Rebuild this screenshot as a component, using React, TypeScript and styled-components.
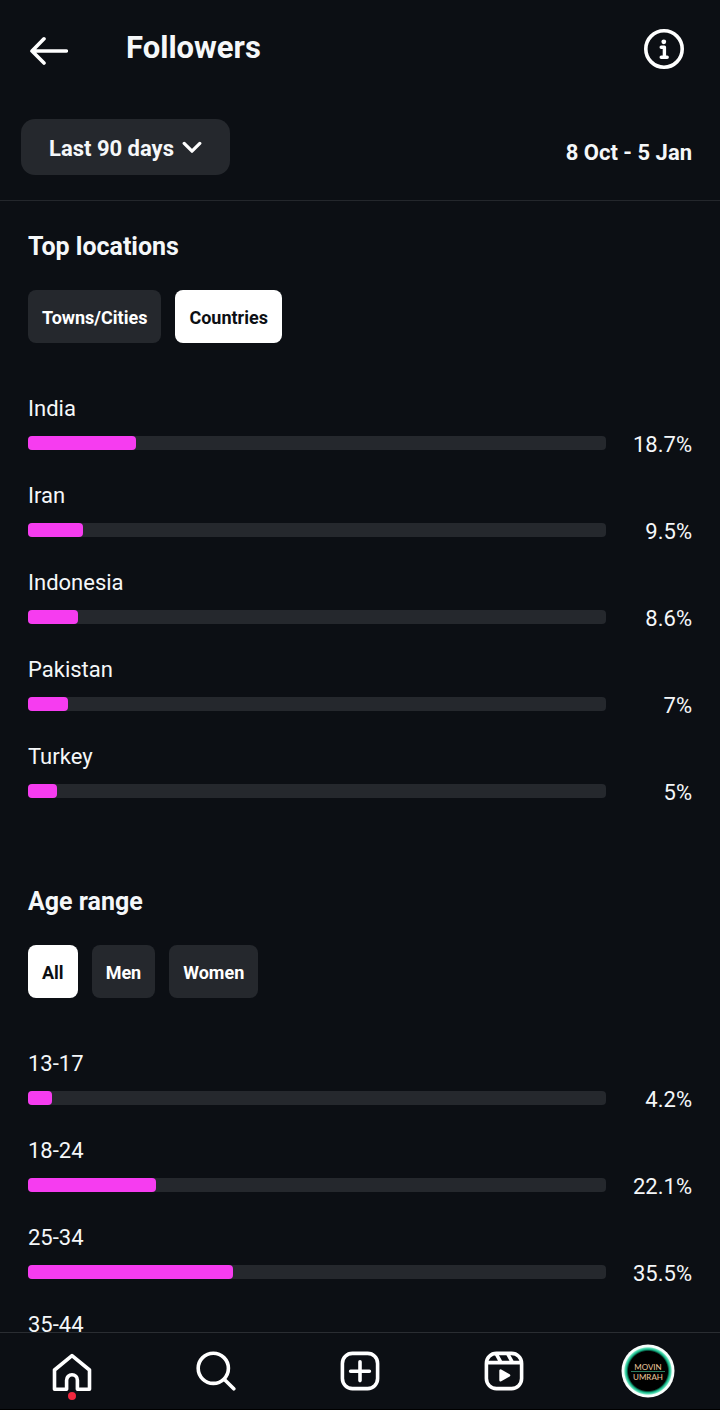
import React, { useState } from 'react';
import styled, { createGlobalStyle } from 'styled-components';

const GlobalStyle = createGlobalStyle`
  * { box-sizing: border-box; }
  body {
    margin: 0;
    background: #0c0f14;
    color: #f5f7f9;
    font-family: Roboto, "Liberation Sans", sans-serif;
  }
  button, select { font-family: inherit; }
`;

const Screen = styled.div`
  display: flex;
  flex-direction: column;
  height: 100vh;
  background: #0c0f14;
`;

const Header = styled.header`
  flex: none;
  border-bottom: 1px solid #24272c;
  padding-bottom: 25px;
`;

const TitleBar = styled.div`
  display: flex;
  align-items: center;
  height: 98px;
  padding: 0 36px 0 28px;
`;

const Title = styled.h1`
  flex: 1;
  margin: 0 0 0 56px;
  padding: 0 0 2px 2px;
  font-size: 31px;
  line-height: 40px;
  font-weight: 700;
`;

const IconButton = styled.button`
  display: flex;
  padding: 0;
  border: 0;
  background: none;
  color: #ffffff;
  cursor: pointer;
`;

const FilterBar = styled.div`
  display: flex;
  align-items: center;
  justify-content: space-between;
  margin-top: 21px;
  padding: 0 28px 0 21px;
`;

const SelectWrap = styled.div`
  display: grid;
  align-items: center;
  > * { grid-area: 1 / 1; }
  > svg {
    justify-self: end;
    margin-right: 28px;
    pointer-events: none;
  }
`;

const PeriodSelect = styled.select`
  appearance: none;
  height: 56px;
  padding: 2px 56px 0 28px;
  border: 0;
  border-radius: 14px;
  background: #25282d;
  color: #f5f7f9;
  font-size: 22px;
  font-weight: 700;
`;

const DateRange = styled.span`
  padding-top: 12px;
  font-size: 22px;
  line-height: 28px;
  font-weight: 700;
`;

const Content = styled.main`
  flex: 1;
  min-height: 0;
  overflow-y: auto;
  scrollbar-width: none;
  padding: 0 28px;
`;

const Section = styled.section`
  padding: 30px 0 51px;
`;

const SectionTitle = styled.h2`
  margin: 0;
  font-size: 25px;
  line-height: 32px;
  font-weight: 700;
`;

const Chips = styled.div`
  display: flex;
  gap: 14px;
  margin: 27px 0 52px;
`;

const Chip = styled.button<{ $active: boolean }>`
  height: 53px;
  padding: 2px 14px 0;
  border: 0;
  border-radius: 8px;
  background: ${({ $active }) => ($active ? '#ffffff' : '#25282d')};
  color: ${({ $active }) => ($active ? '#0c0f14' : '#ffffff')};
  font-size: 18px;
  font-weight: 700;
  cursor: pointer;
`;

const BarList = styled.ul`
  display: flex;
  flex-direction: column;
  gap: 25px;
  margin: 0;
  padding: 0;
  list-style: none;
  font-size: 22px;
  line-height: 28px;
`;

const BarRow = styled.li`
  display: grid;
  grid-template-columns: 1fr 86px;
  row-gap: 6px;
  align-items: center;
`;

const BarLabel = styled.span`
  grid-column: 1 / -1;
`;

const Track = styled.div`
  height: 14px;
  border-radius: 4px;
  background: #25282d;
`;

const Fill = styled.div`
  height: 100%;
  border-radius: 4px;
  background: #f63cf0;
`;

const BarValue = styled.span`
  padding-top: 2px;
  margin-bottom: -2px;
  text-align: right;
`;

const NavBar = styled.nav`
  flex: none;
  display: grid;
  grid-template-columns: repeat(5, 1fr);
  height: 78px;
  border-top: 1px solid #2a2d32;
  border-bottom: 1px solid #000000;
`;

const NavLink = styled.a`
  position: relative;
  display: flex;
  align-items: center;
  justify-content: center;
  color: #ffffff;
`;

const Dot = styled.span`
  position: absolute;
  bottom: 9px;
  left: 50%;
  width: 8px;
  height: 8px;
  margin-left: -4px;
  border-radius: 50%;
  background: #f2283f;
`;

type Item = { label: string; value: number };

const countries: Item[] = [
  { label: 'India', value: 18.7 },
  { label: 'Iran', value: 9.5 },
  { label: 'Indonesia', value: 8.6 },
  { label: 'Pakistan', value: 7 },
  { label: 'Turkey', value: 5 },
];

const ages: Item[] = [
  { label: '13-17', value: 4.2 },
  { label: '18-24', value: 22.1 },
  { label: '25-34', value: 35.5 },
  { label: '35-44', value: 22.4 },
];

const Icon = ({ children }: { children: React.ReactNode }) => (
  <svg
    width="40"
    height="40"
    viewBox="0 0 40 40"
    fill="none"
    stroke="currentColor"
    strokeWidth="3.6"
    strokeLinecap="round"
    strokeLinejoin="round"
    aria-hidden="true"
  >
    {children}
  </svg>
);

const Avatar = () => (
  <svg width="54" height="54" viewBox="0 0 54 54" aria-hidden="true">
    <defs>
      <radialGradient id="ring" cx="50%" cy="50%" r="50%">
        <stop offset="74%" stopColor="#000000" />
        <stop offset="81%" stopColor="#14b083" />
        <stop offset="87%" stopColor="#5fe0b8" />
        <stop offset="91%" stopColor="#f4fffb" />
        <stop offset="100%" stopColor="#ffffff" />
      </radialGradient>
    </defs>
    <circle cx="27" cy="27" r="26.5" fill="url(#ring)" />
    <path d="M10 27.5H44" stroke="#2c7a5e" strokeWidth="1" />
    <g fill="#ecc79d" fontFamily="Lato, sans-serif" fontSize="8" textAnchor="middle">
      <text x="27" y="25.5">MOVIN</text>
      <text x="27" y="36">UMRAH</text>
    </g>
  </svg>
);

function Chart({ items }: { items: Item[] }) {
  return (
    <BarList>
      {items.map(({ label, value }) => (
        <BarRow key={label}>
          <BarLabel>{label}</BarLabel>
          <Track role="meter" aria-label={label} aria-valuenow={value} aria-valuemin={0} aria-valuemax={100}>
            <Fill style={{ width: `${value}%` }} />
          </Track>
          <BarValue>{value}%</BarValue>
        </BarRow>
      ))}
    </BarList>
  );
}

type BreakdownProps = { title: string; options: string[]; initial: string; items: Item[] };

function Breakdown({ title, options, initial, items }: BreakdownProps) {
  const [active, setActive] = useState(initial);
  return (
    <Section>
      <SectionTitle>{title}</SectionTitle>
      <Chips>
        {options.map((option) => (
          <Chip
            key={option}
            type="button"
            $active={option === active}
            aria-pressed={option === active}
            onClick={() => setActive(option)}
          >
            {option}
          </Chip>
        ))}
      </Chips>
      <Chart items={items} />
    </Section>
  );
}

export default function App() {
  return (
    <Screen>
      <GlobalStyle />
      <Header>
        <TitleBar>
          <IconButton type="button" aria-label="Back">
            <Icon>
              <path d="M16 9.8 4 22l12 12M4 22h34.3" />
            </Icon>
          </IconButton>
          <Title>Followers</Title>
          <IconButton type="button" aria-label="Information">
            <Icon>
              <circle cx="20" cy="20" r="18.2" />
              <circle cx="19.8" cy="12.8" r="2.4" fill="currentColor" stroke="none" />
              <path d="M17.2 18.2h3.2v10M17.2 28.3h6" strokeWidth="3.4" />
            </Icon>
          </IconButton>
        </TitleBar>
        <FilterBar>
          <SelectWrap>
            <PeriodSelect aria-label="Period" defaultValue="90">
              <option value="7">Last 7 days</option>
              <option value="30">Last 30 days</option>
              <option value="90">Last 90 days</option>
            </PeriodSelect>
            <svg
              width="20"
              height="14"
              viewBox="0 0 20 14"
              fill="none"
              stroke="#ffffff"
              strokeWidth="3.2"
              strokeLinecap="round"
              strokeLinejoin="round"
              aria-hidden="true"
            >
              <path d="M2.2 3.4l7.8 7.8 7.8-7.8" />
            </svg>
          </SelectWrap>
          <DateRange>8 Oct - 5 Jan</DateRange>
        </FilterBar>
      </Header>
      <Content>
        <Breakdown
          title="Top locations"
          options={['Towns/Cities', 'Countries']}
          initial="Countries"
          items={countries}
        />
        <Breakdown title="Age range" options={['All', 'Men', 'Women']} initial="All" items={ages} />
      </Content>
      <NavBar aria-label="Main">
        <NavLink href="#home" aria-label="Home">
          <Icon>
            <path d="M20 4.6 37.5 19v19.2H25.4v-9a5.4 5.4 0 0 0-10.8 0v9H2.5V19z" />
          </Icon>
          <Dot />
        </NavLink>
        <NavLink href="#search" aria-label="Search">
          <Icon>
            <circle cx="17.3" cy="17.3" r="15.1" />
            <path d="M28.4 28.4 37.8 37.8" />
          </Icon>
        </NavLink>
        <NavLink href="#create" aria-label="Create">
          <Icon>
            <rect x="2.4" y="2.4" width="35.2" height="35.2" rx="10" />
            <path d="M20 10.8v18.8M10.6 20.2h18.8" />
          </Icon>
        </NavLink>
        <NavLink href="#reels" aria-label="Reels">
          <Icon>
            <rect x="2.4" y="2.4" width="35.2" height="35.2" rx="10" />
            <path d="M3 11.6h34M12.3 3l4.6 8.4M23.8 3l4.6 8.4" strokeLinecap="butt" />
            <path d="M16.6 19.6v9.6l8.4-4.8z" fill="currentColor" strokeWidth="2.6" />
          </Icon>
        </NavLink>
        <NavLink href="#profile" aria-label="Profile">
          <Avatar />
        </NavLink>
      </NavBar>
    </Screen>
  );
}
